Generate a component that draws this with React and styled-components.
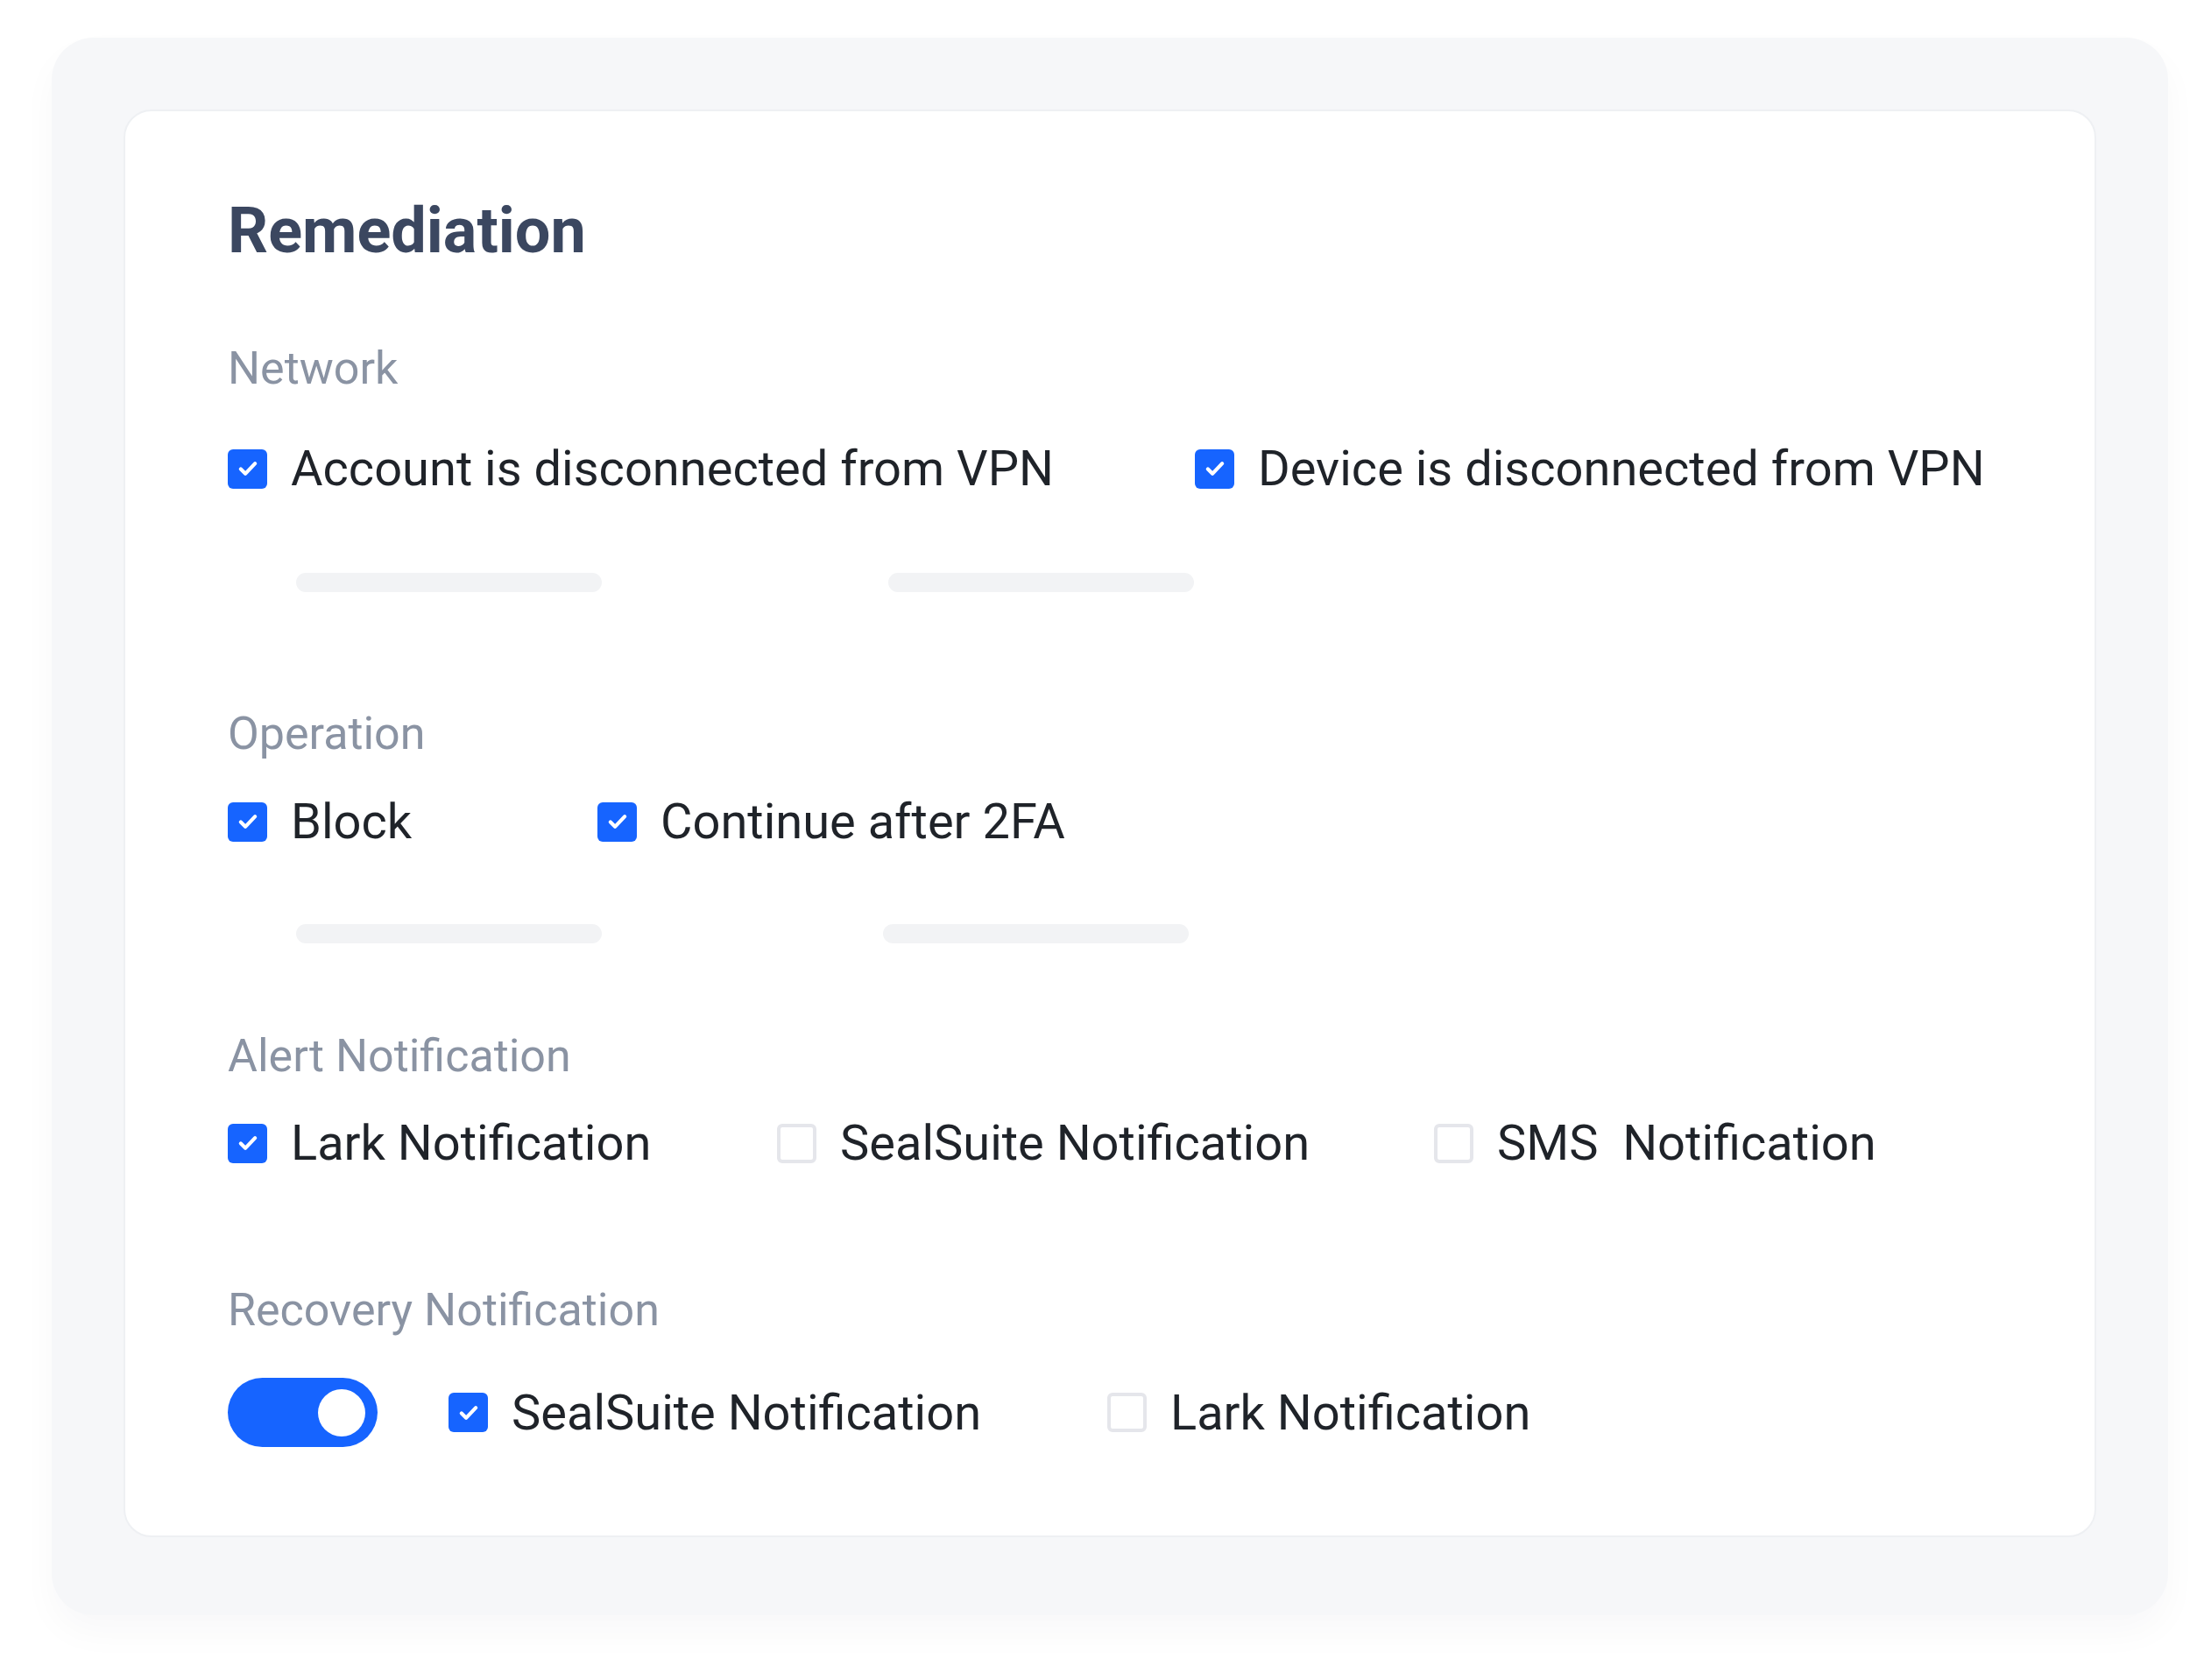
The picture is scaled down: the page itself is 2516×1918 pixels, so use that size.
import React from "react";
import styled, { createGlobalStyle } from "styled-components";

const Global = createGlobalStyle`
  html, body { margin: 0; padding: 0; background: #fff; }
  body { font-family: Roboto, "Noto Sans", sans-serif; }
`;

const Page = styled.div`
  width: 2516px;
  height: 1918px;
  padding: 43px 0 0 59px;
  box-sizing: border-box;
`;

const Panel = styled.div`
  width: 2416px;
  height: 1801px;
  box-sizing: border-box;
  padding: 82px;
  background: #f6f7f9;
  border-radius: 48px;
  box-shadow: 0 20px 40px rgba(20, 30, 50, 0.03);
`;

const Card = styled.div`
  width: 2252px;
  height: 1630px;
  box-sizing: border-box;
  padding: 92px 117px 0;
  background: #fff;
  border: 2px solid #eef0f3;
  border-radius: 32px;
  display: flex;
  flex-direction: column;
`;

const Title = styled.h1`
  margin: 0;
  font-size: 72px;
  line-height: 89px;
  font-weight: 700;
  color: #3b4760;
`;

const Label = styled.div`
  margin-top: ${(p) => p.$mt}px;
  font-size: 52px;
  line-height: 62px;
  color: #8a93a3;
`;

const Row = styled.div`
  margin-top: ${(p) => p.$mt}px;
  display: flex;
  align-items: center;
  height: ${(p) => p.$h || 64}px;
`;

const Item = styled.div`
  display: flex;
  align-items: center;
  gap: 27px;
  width: ${(p) => (p.$w ? `${p.$w}px` : "auto")};
  flex: none;
  font-size: 56px;
  line-height: 64px;
  color: #1f2329;
  white-space: pre;
`;

const Box = styled.span`
  width: 45px;
  height: 45px;
  box-sizing: border-box;
  border-radius: 6px;
  flex: none;
  display: flex;
  align-items: center;
  justify-content: center;
  background: ${(p) => (p.$on ? "#1664ff" : "#fff")};
  border: ${(p) => (p.$on ? "none" : "4px solid #e5e6eb")};
`;

const Bars = styled.div`
  margin-top: ${(p) => p.$mt}px;
  display: flex;
  padding-left: 78px;
  gap: ${(p) => p.$gap}px;
`;

const Bar = styled.div`
  width: 349px;
  height: 22px;
  border-radius: 11px;
  background: #f2f3f5;
`;

const Toggle = styled.div`
  width: 171px;
  height: 79px;
  border-radius: 40px;
  background: #1664ff;
  flex: none;
  display: flex;
  align-items: center;
  justify-content: flex-end;
  padding-right: 14px;
  box-sizing: border-box;
  margin-right: 81px;
`;

const Knob = styled.span`
  width: 54px;
  height: 54px;
  border-radius: 50%;
  background: #fff;
`;

const Check = ({ on, children, w }) => (
  <Item $w={w}>
    <Box $on={on}>
      {on && (
        <svg width="28" height="28" viewBox="0 0 24 24" fill="none">
          <path d="M5 12.5l4.5 4.5L19 7" stroke="#fff" strokeWidth="3.6" strokeLinecap="round" strokeLinejoin="round" />
        </svg>
      )}
    </Box>
    {children}
  </Item>
);

export default function App() {
  return (
    <>
      <Global />
      <Page>
        <Panel>
          <Card>
            <Title>Remediation</Title>
            <Label $mt={82}>Network</Label>
            <Row $mt={51}>
              <Check on w={1104}>Account is disconnected from VPN</Check>
              <Check on>Device is disconnected from VPN</Check>
            </Row>
            <Bars $mt={87} $gap={327}>
              <Bar />
              <Bar />
            </Bars>
            <Label $mt={131}>Operation</Label>
            <Row $mt={37}>
              <Check on w={422}>Block</Check>
              <Check on>Continue after 2FA</Check>
            </Row>
            <Bars $mt={85} $gap={321}>
              <Bar />
              <Bar />
            </Bars>
            <Label $mt={98}>Alert Notification</Label>
            <Row $mt={36}>
              <Check on w={627}>Lark Notification</Check>
              <Check w={750}>SealSuite Notification</Check>
              <Check>{"SMS  Notification"}</Check>
            </Row>
            <Label $mt={128}>Recovery Notification</Label>
            <Row $mt={46} $h={79}>
              <Toggle>
                <Knob />
              </Toggle>
              <Check on w={752}>SealSuite Notification</Check>
              <Check>Lark Notification</Check>
            </Row>
          </Card>
        </Panel>
      </Page>
    </>
  );
}
